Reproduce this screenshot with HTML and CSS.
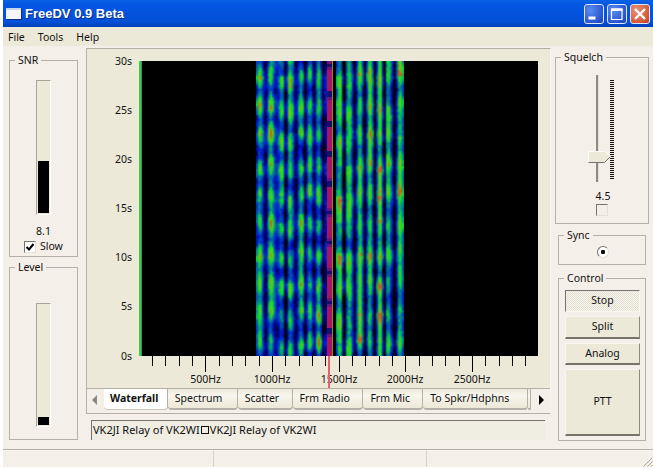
FILE: index.html
```html
<!DOCTYPE html>
<html lang="en">
<head>
    <title>FreeDV 0.9 Beta</title>
    <link rel="stylesheet" href="styles.css">
</head>
<body>

<div class="window">
    <header class="titlebar">
        <span class="app-icon"></span>
        <span class="title-text">FreeDV 0.9 Beta</span>
        <div class="win-buttons">
            <span class="win-btn">
                <svg width="20" height="20" viewBox="0 0 20 20"><rect x="4.500" y="12.500" width="7" height="3" fill="#fff"/></svg>
            </span>
            <span class="win-btn">
                <svg width="20" height="20" viewBox="0 0 20 20"><path d="M4.500 5h10.500v10.500h-10.500z" fill="none" stroke="#fff" stroke-width="1.200"/><rect x="4" y="4.500" width="11.500" height="2.400" fill="#fff"/></svg>
            </span>
            <span class="win-btn win-close">
                <svg width="20" height="20" viewBox="0 0 20 20"><path d="M5 5l10 10M15 5l-10 10" stroke="#fff" stroke-width="2.400" fill="none"/></svg>
            </span>
        </div>
    </header>

    <nav class="menubar">
        <a>File</a>
        <a>Tools</a>
        <a>Help</a>
    </nav>

    <main class="client">
        <div class="col-left">
            <div class="group group-snr">
                <div class="group-title">SNR</div>
                <div class="gauge gauge-snr"><div class="gauge-fill fill-snr"></div></div>
                <div class="snr-value">8.1</div>
                <div class="check-row">
                    <span class="check-box">
                        <svg width="10" height="10" viewBox="0 0 10 10"><path d="M1.500 5l2.500 2.500 4.500-5.500" fill="none" stroke="#000" stroke-width="2"/></svg>
                    </span>
                    <span>Slow</span>
                </div>
            </div>
            <div class="group group-level">
                <div class="group-title">Level</div>
                <div class="gauge gauge-level"><div class="gauge-fill fill-level"></div></div>
            </div>
        </div>

        <div class="col-center">
            <div class="notebook">
                <div class="plot">
                    <svg class="axes" width="463" height="340" viewBox="87 49 463 340">
                        <g class="axis-y">
                            <text x="132" y="65">30s</text>
                            <text x="132" y="114">25s</text>
                            <text x="132" y="163">20s</text>
                            <text x="132" y="212">15s</text>
                            <text x="132" y="261">10s</text>
                            <text x="132" y="310">5s</text>
                            <text x="132" y="360">0s</text>
                        </g>
                        <path stroke="#000" fill="none" d="M152.500 356v10M165.500 356v10M179.500 356v10M192.500 356v10M205.500 356v16M219.500 356v10M232.500 356v10M245.500 356v10M259.500 356v10M272.500 356v16M285.500 356v10M299.500 356v10M312.500 356v10M325.500 356v10M339.500 356v16M352.500 356v10M365.500 356v10M379.500 356v10M392.500 356v10M405.500 356v16M419.500 356v10M432.500 356v10M445.500 356v10M459.500 356v10M472.500 356v16M485.500 356v10M499.500 356v10M512.500 356v10M525.500 356v10"/>
                        <g class="axis-x">
                            <text x="205.500" y="383">500Hz</text>
                            <text x="272" y="383">1000Hz</text>
                            <text x="339" y="383">1500Hz</text>
                            <text x="405" y="383">2000Hz</text>
                            <text x="472" y="383">2500Hz</text>
                        </g>
                        <rect x="328" y="356" width="2" height="32" fill="#e8606c"/>
                    </svg>
                    <canvas id="waterfall" class="waterfall" width="399" height="295"></canvas>
                </div>
                <div class="tabs">
                    <span class="tab-arrow">
                        <svg width="8" height="12" viewBox="0 0 8 12"><path d="M6 1v10l-5-5z" fill="#8a8a84"/></svg>
                    </span>
                    <span class="tab tab-active">Waterfall</span>
                    <span class="tab tab-spectrum">Spectrum</span>
                    <span class="tab tab-scatter">Scatter</span>
                    <span class="tab tab-radio">Frm Radio</span>
                    <span class="tab tab-mic">Frm Mic</span>
                    <span class="tab tab-spkr">To Spkr/Hdphns</span>
                    <span class="tab tab-stub"></span>
                    <span class="tab-arrow tab-arrow-right">
                        <svg width="8" height="12" viewBox="0 0 8 12"><path d="M2 1v10l5-5z" fill="#000"/></svg>
                    </span>
                </div>
            </div>
            <div class="text-box">VK2JI Relay of VK2WI<span class="no-glyph"></span>VK2JI Relay of VK2WI</div>
        </div>

        <div class="col-right">
            <div class="group group-squelch">
                <div class="group-title">Squelch</div>
                <div class="slider">
                    <div class="slider-track"></div>
                    <div class="slider-ticks"></div>
                    <svg class="slider-thumb" width="23" height="12" viewBox="0 0 23 12">
                        <path d="M.5.5h16l6 5-6 6h-16z" fill="#ece9d8" stroke="#fff"/>
                        <path d="M.5 11.500h16l6-6" fill="none" stroke="#77736a"/>
                    </svg>
                </div>
                <div class="squelch-value">4.5</div>
                <span class="check-box check-blank"></span>
            </div>
            <div class="group group-sync">
                <div class="group-title">Sync</div>
                <span class="radio"></span>
            </div>
            <div class="group group-control">
                <div class="group-title">Control</div>
                <button class="btn btn-stop">Stop</button>
                <button class="btn btn-split">Split</button>
                <button class="btn btn-analog">Analog</button>
                <button class="btn btn-ptt">PTT</button>
            </div>
        </div>
    </main>

    <footer class="statusbar">
        <div class="pane pane-a"></div>
        <div class="pane pane-b"></div>
        <div class="pane pane-c">
            <svg class="grip" width="12" height="12" viewBox="0 0 12 12"><path d="M11.500 2.500l-9 9M11.500 6.500l-5 5M11.500 10l-1.500 1.500" stroke="#a8a498" fill="none"/></svg>
        </div>
    </footer>
</div>

<script src="plot.js"></script>

</body>
</html>
```

FILE: styles.css
```css
* {
    box-sizing: border-box;
}

body {
    margin: 0;
    padding: 0;
    background-color: white;
    font-family: "Noto Sans", sans-serif;
    font-size: 10.5px;
    color: #111;
    overflow: hidden;
}

.window {
    width: 653px;
    height: 468px;
    padding-left: 3px;
    display: flex;
    flex-direction: column;
}

.titlebar {
    height: 27px;
    display: flex;
    align-items: center;
    padding-left: 3px;
    background: linear-gradient(#0a62e6, #0457e2 15%, #0450d8 80%, #0340b8);
    color: white;
}

.app-icon {
    width: 15px;
    height: 11px;
    background-color: #f4f6fb;
    border-top: 2px solid #c9d6f0;
    box-shadow: 1px 1px 0 #0a2f8c;
    margin-right: 4px;
}

.title-text {
    font-family: "Liberation Sans", sans-serif;
    font-weight: bold;
    font-size: 13px;
    text-shadow: 1px 1px 0 #0a2f8c;
}

.win-buttons {
    margin-left: auto;
    margin-right: 3px;
    display: flex;
    gap: 3px;
}

.win-btn {
    width: 20px;
    height: 20px;
    border: 1px solid #dfe8fb;
    border-radius: 3px;
    background: radial-gradient(circle at 30% 30%, #5a8df0, #2a55d0 70%, #1a3fb8);
    display: block;
}

.win-btn svg {
    display: block;
    margin: -1px;
}

.win-close {
    background: radial-gradient(circle at 30% 30%, #e89078, #d55a38 70%, #b83c20);
}

.menubar {
    height: 19px;
    display: flex;
    align-items: center;
    background-color: #ece9d8;
    padding-left: 5px;
    gap: 13px;
}

.client {
    height: 403px;
    display: flex;
    background-color: #f5efe9;
}

.col-left {
    width: 83px;
    padding: 14px 0 0 6px;
}

.group {
    border: 1px solid #b5b1a6;
}

.group-title {
    display: table;
    background-color: #f5efe9;
    height: 13px;
    line-height: 13px;
    padding: 0 3px;
    margin: -7px 0 0 5px;
}

.group-snr {
    width: 69px;
    height: 197px;
}

.group-level {
    width: 69px;
    height: 173px;
    margin-top: 10px;
}

.gauge {
    width: 15px;
    background-color: #ece9d8;
    border-top: 1px solid #a8a498;
    border-left: 1px solid #a8a498;
    border-right: 1px solid white;
    border-bottom: 1px solid white;
    padding: 0 1px 1px 1px;
    display: flex;
    flex-direction: column;
    justify-content: flex-end;
}

.gauge-snr {
    height: 135px;
    margin: 13px 0 0 26px;
}

.gauge-level {
    height: 124px;
    margin: 29px 0 0 26px;
}

.gauge-fill {
    background-color: black;
}

.fill-snr {
    height: 52px;
}

.fill-level {
    height: 8px;
}

.snr-value {
    text-align: center;
    margin-top: 9px;
    height: 15px;
    line-height: 15px;
}

.check-row {
    display: flex;
    align-items: center;
    gap: 4px;
    margin: 1px 0 0 14px;
    line-height: 13px;
}

.check-box {
    width: 12px;
    height: 12px;
    display: block;
    background-color: white;
    border-top: 1px solid #77736a;
    border-left: 1px solid #77736a;
    border-right: 1px solid #e4e0d4;
    border-bottom: 1px solid #e4e0d4;
}

.check-box svg {
    display: block;
}

.col-center {
    width: 465px;
    padding-top: 2px;
}

.notebook {
    height: 366px;
    background-color: #ece9d8;
    border-top: 1px solid #b5b1a6;
    border-left: 1px solid #b5b1a6;
    border-right: 1px solid #f8f5ef;
    border-bottom: 1px solid #b5b1a6;
}

.plot {
    height: 340px;
    position: relative;
    border-bottom: 1px solid #b5b1a6;
}

.axes {
    display: block;
    font-size: 10.5px;
}

.axis-y text {
    text-anchor: end;
    fill: #111;
}

.axis-x text {
    text-anchor: middle;
    fill: #111;
}

.waterfall {
    position: absolute;
    left: 52px;
    top: 12px;
}

.tabs {
    height: 24px;
    display: flex;
    align-items: flex-start;
    background-color: #f5efe9;
}

.tab-arrow {
    width: 17px;
    height: 21px;
    display: flex;
    align-items: center;
    justify-content: center;
}

.tab-arrow-right {
    width: 19px;
}

.tab {
    height: 21px;
    line-height: 19px;
    text-align: left;
    padding-left: 7px;
    border-right: 1px solid #b5b1a6;
    border-bottom: 2px solid #b5b1a6;
    border-radius: 0 0 4px 4px;
    background: linear-gradient(#ece9d8, #f8f6ee 35%, #f4f1e6 55%, #ece9d8);
}

.tab-active {
    width: 64px;
    height: 21px;
    background: white;
    font-weight: bold;
    padding-left: 6px;
    border-bottom: 1px solid #c8c4b8;
}

.tab-spectrum {
    width: 70px;
}

.tab-scatter {
    width: 55px;
}

.tab-radio {
    width: 71px;
}

.tab-mic {
    width: 60px;
}

.tab-spkr {
    width: 105px;
}

.tab-stub {
    width: 3px;
    padding: 0;
}

.text-box {
    width: 454px;
    height: 20px;
    margin: 6px 0 0 5px;
    background-color: #f0ede2;
    border-top: 1px solid #77736a;
    border-left: 1px solid #77736a;
    padding-left: 1px;
    line-height: 17px;
    font-size: 11px;
    white-space: nowrap;
}

.no-glyph {
    display: inline-block;
    width: 8px;
    height: 8px;
    border: 1px solid #111;
    margin: 0 1px;
}

.col-right {
    padding: 11px 0 0 4px;
}

.group-squelch {
    width: 94px;
    height: 167px;
}

.slider {
    position: relative;
    height: 112px;
    margin-top: 5px;
}

.slider-track {
    position: absolute;
    left: 40px;
    top: 6px;
    bottom: -1px;
    width: 3px;
    background-color: #8e8a80;
    border-right: 1px solid #e4e0d4;
}

.slider-ticks {
    position: absolute;
    left: 54px;
    top: 11px;
    width: 4px;
    height: 100px;
    background-image: repeating-linear-gradient(#111 0, #111 1px, transparent 1px, transparent 2px);
}

.slider-thumb {
    position: absolute;
    left: 32px;
    top: 82px;
}

.squelch-value {
    text-align: center;
    margin-top: 8px;
    height: 14px;
    line-height: 14px;
    padding-left: 2px;
}

.check-blank {
    background-color: #f5efe9;
    margin: 1px 0 0 40px;
}

.group-sync {
    width: 88px;
    height: 30px;
    margin: 11px 0 0 3px;
}

.radio {
    display: block;
    width: 12px;
    height: 12px;
    margin: 4px 0 0 38px;
    border-radius: 50%;
    background: radial-gradient(circle, #111 2px, white 2.5px);
    border: 1px solid #e4e0d4;
    border-top-color: #77736a;
    border-left-color: #77736a;
}

.group-control {
    width: 88px;
    height: 163px;
    margin: 13px 0 0 3px;
    display: flex;
    flex-direction: column;
    align-items: flex-start;
}

.group-control .group-title {
    margin-bottom: 5px;
}

.btn {
    width: 75px;
    margin: 0 0 4px 6px;
    padding: 0 0 2px 0;
    background-color: #ece9d8;
    border: 1px solid #f8f6ee;
    border-right-color: #8e8a80;
    border-bottom: 2px solid #77736a;
    font-family: "Noto Sans", sans-serif;
    font-size: 10.5px;
    color: #111;
}

.btn-stop {
    height: 22px;
    border-top: 1px solid #77736a;
    border-left: 1px solid #77736a;
    border-right: 1px solid #f8f6ee;
    border-bottom: 1px solid #f8f6ee;
    background-color: #f8f6ee;
    background-image: conic-gradient(#e2dfd0 25%, transparent 0 50%, #e2dfd0 0 75%, transparent 0);
    background-size: 2px 2px;
}

.btn-split {
    height: 23px;
}

.btn-analog {
    height: 22px;
}

.btn-ptt {
    height: 67px;
}

.statusbar {
    height: 18px;
    display: flex;
    background-color: #f5efe9;
    border-top: 1px solid #b5b1a6;
    box-shadow: inset 0 1px 0 #f8f6ee;
}

.pane {
    border-right: 1px solid #d8d4c8;
    position: relative;
}

.pane-a {
    width: 211px;
    margin-right: 2px;
}

.pane-b {
    width: 211px;
    margin-right: 2px;
}

.pane-c {
    flex: 1;
    border-right: none;
}

.grip {
    position: absolute;
    right: 0;
    bottom: 0;
}
```

FILE: plot.js
```js
// waterfall is drawn from made up signal data, one cell is 2x3 canvas pixels
const canvas = document.getElementById('waterfall');
const ctx = canvas.getContext('2d');

const cellW = 2;
const cellH = 3;
const originX = 139;
const originY = 61;
const bandLeft = 256;
const bandRight = 403;
const period = 29.6;

let seed = 90210;
function rand() {
    seed = (seed * 16807) % 2147483647;
    return seed / 2147483647;
}

// carriers of the signal in page x, amp is how strong the carrier is
const carriers = [
    { x: 260, amp: 0.9 }, { x: 271, amp: 1 }, { x: 282, amp: 0.8 }, { x: 290, amp: 0.9 },
    { x: 302, amp: 0.85 }, { x: 310, amp: 0.85 }, { x: 319, amp: 0.85 }, { x: 340, amp: 0.95 },
    { x: 349, amp: 0.85 }, { x: 360, amp: 0.95 }, { x: 370, amp: 0.85 }, { x: 380, amp: 1 },
    { x: 388, amp: 0.8 }, { x: 400, amp: 0.9 }
];

// dark lanes between the carriers
const lanes = [
    { x: 266, amp: 0.35 }, { x: 285.5, amp: 0.8 }, { x: 296, amp: 0.4 }, { x: 305, amp: 0.85 },
    { x: 314, amp: 0.45 }, { x: 323, amp: 0.6 }, { x: 344, amp: 1 }, { x: 355, amp: 0.65 },
    { x: 365, amp: 0.95 }, { x: 375, amp: 1 }, { x: 384.5, amp: 1 }, { x: 395, amp: 0.85 }
];

carriers.forEach(c => {
    c.phase = (rand() - 0.5) * 16;
    c.width = 2 + rand();
    // every fade cycle gets its own strength
    c.cycles = [];
    for (let i = 0; i < 12; i++) {
        c.cycles.push(0.62 + rand() * 0.5);
    }
});

// coarse noise so the fades are not the same all over the band
const patchW = 9;
const patchH = 14;
const patches = [];
for (let j = 0; j < 24; j++) {
    patches.push([]);
    for (let i = 0; i < 20; i++) {
        patches[j].push(rand() - 0.5);
    }
}

function patchAt(x, y) {
    const px = (x - bandLeft) / patchW;
    const py = (y - originY) / patchH;
    const i = Math.floor(px);
    const j = Math.floor(py);
    const tx = px - i;
    const ty = py - j;
    const top = patches[j][i] * (1 - tx) + patches[j][i + 1] * tx;
    const bottom = patches[j + 1][i] * (1 - tx) + patches[j + 1][i + 1] * tx;
    return top * (1 - ty) + bottom * ty;
}

const stops = [
    [0, 0, 0, 0],
    [0.2, 0, 0, 100],
    [0.36, 0, 25, 215],
    [0.52, 0, 110, 160],
    [0.66, 5, 215, 60],
    [0.88, 90, 210, 20],
    [1, 210, 90, 20]
];

function colour(v) {
    v = Math.max(0, Math.min(1, v));
    for (let i = 1; i < stops.length; i++) {
        if (v <= stops[i][0]) {
            const a = stops[i - 1];
            const b = stops[i];
            const t = (v - a[0]) / (b[0] - a[0]);
            return `rgb(${a[1] + (b[1] - a[1]) * t},${a[2] + (b[2] - a[2]) * t},${a[3] + (b[3] - a[3]) * t})`;
        }
    }
    return 'rgb(210,90,20)';
}

function gauss(x, c, s) {
    return Math.exp(-((x - c) * (x - c)) / (2 * s * s));
}

// fading on page y, a dip about every 30 pixels
function fade(y, shift) {
    return 0.5 + 0.5 * Math.cos((y - 108 + shift) * 2 * Math.PI / period);
}

function signalAt(x, y) {
    // right half of the band fades less than the left half
    const depth = x < 325 ? 0.85 : 0.45;
    const base = fade(y, 0);
    const cycle = Math.abs(Math.round((y - 61) / period)) % 12;
    let signal = 0;
    carriers.forEach(c => {
        const m = 1 - depth + depth * fade(y, c.phase);
        signal = Math.max(signal, gauss(x, c.x, c.width) * c.amp * c.cycles[cycle] * (0.22 + 0.42 * m));
    });
    let dark = 0;
    lanes.forEach(l => {
        dark = Math.max(dark, gauss(x, l.x, 1.3) * l.amp);
    });
    let v = 0.27 + 0.08 * base + signal;
    v -= dark * (0.5 - 0.15 * base);
    v += patchAt(x, y) * 0.3;
    return v + (rand() - 0.5) * 0.12;
}

function drawWaterfall() {
    ctx.fillStyle = 'black';
    ctx.fillRect(0, 0, canvas.width, canvas.height);

    // small picture first, scaling it up gives the soft edges of the plot
    const small = document.createElement('canvas');
    const cols = Math.ceil((bandRight - bandLeft) / cellW);
    const rows = Math.ceil(canvas.height / cellH);
    small.width = cols;
    small.height = rows;
    const sctx = small.getContext('2d');
    for (let j = 0; j < rows; j++) {
        for (let i = 0; i < cols; i++) {
            sctx.fillStyle = colour(signalAt(bandLeft + i * cellW + 1, originY + j * cellH + 1));
            sctx.fillRect(i, j, 1, 1);
        }
    }
    ctx.imageSmoothingEnabled = true;
    ctx.drawImage(small, bandLeft - originX, 0, cols * cellW, rows * cellH);

    // strong carrier with the black lane beside it
    for (let y = 0; y < canvas.height; y += cellH) {
        const m = fade(originY + y, 0);
        ctx.fillStyle = m < 0.06 ? '#16106a' : (m < 0.18 ? '#6a1478' : '#a81460');
        ctx.fillRect(327 - originX, y, 5, cellH);
    }
    ctx.fillStyle = '#8a8a30';
    ctx.fillRect(332 - originX, 0, 1, canvas.height);
    ctx.fillStyle = 'black';
    ctx.fillRect(333 - originX, 0, 3, canvas.height);

    // left edge of the spectrum
    ctx.fillStyle = '#4cc83c';
    ctx.fillRect(0, 0, 2, canvas.height);
    ctx.fillStyle = '#1a9a80';
    ctx.fillRect(2, 0, 1, canvas.height);
}

drawWaterfall();
```
